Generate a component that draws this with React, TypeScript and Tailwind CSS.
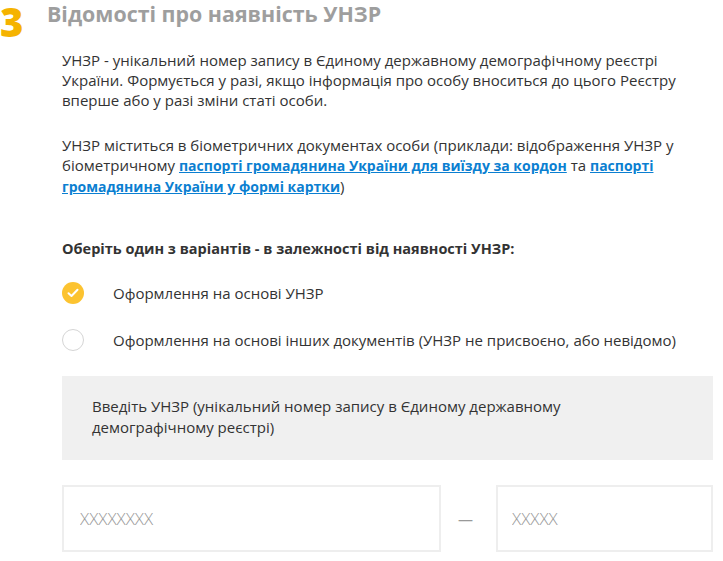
import React, { useState } from 'react'

const font = { fontFamily: '"Open Sans", "Noto Sans", sans-serif' }

const Radio: React.FC<{ checked: boolean }> = ({ checked }) =>
  checked ? (
    <span className="flex h-[22px] w-[22px] shrink-0 items-center justify-center rounded-full bg-[#fcc330]">
      <svg width="12" height="10" viewBox="0 0 12 10" fill="none">
        <path d="M1.5 5.2 4.5 8 10.5 1.8" stroke="#fff" strokeWidth="2" strokeLinecap="round" strokeLinejoin="round" />
      </svg>
    </span>
  ) : (
    <span className="h-[22px] w-[22px] shrink-0 rounded-full border border-[#d5d5d5] bg-white" />
  )

export default function App() {
  const [choice, setChoice] = useState(0)
  const options = [
    'Оформлення на основі УНЗР',
    'Оформлення на основі інших документів (УНЗР не присвоєно, або невідомо)',
  ]

  return (
    <div className="h-[561px] w-[723px] overflow-hidden bg-white text-[#333]" style={font}>
      <div className="flex items-start">
        <div className="w-[47px] text-[40px] font-extrabold leading-[44px] text-[#f5b300]">3</div>
        <h2 className="pt-[1px] text-[21.4px] font-bold leading-[26px] text-[#9e9e9e]">Відомості про наявність УНЗР</h2>
      </div>

      <div className="ml-[62px] mr-[10px] mt-[6px] text-[15px] leading-[20px]">
        <p>
          УНЗР - унікальний номер запису в Єдиному державному демографічному реєстрі України. Формується у разі,
          якщо інформація про особу вноситься до цього Реєстру вперше або у разі зміни статі особи.
        </p>
        <p className="mt-[25px]">
          УНЗР міститься в біометричних документах особи (приклади: відображення УНЗР у біометричному{' '}
          <a href="#" className="text-[14px] leading-[20px] font-bold text-[#0b7fd1] underline">паспорті громадянина України для виїзду за кордон</a>{' '}
          та{' '}
          <a href="#" className="text-[14px] leading-[20px] font-bold text-[#0b7fd1] underline">паспорті громадянина України у формі картки</a>)
        </p>

        <p className="mt-[42px] text-[14.5px] font-bold">Оберіть один з варіантів - в залежності від наявності УНЗР:</p>

        <div className="mt-[23px] flex flex-col gap-[25px]">
          {options.map((o, i) => (
            <label key={o} className="flex cursor-pointer items-center" onClick={() => setChoice(i)}>
              <Radio checked={choice === i} />
              <span className="ml-[29px]">{o}</span>
            </label>
          ))}
        </div>

        <div className="mt-[25px] bg-[#f0f0f0] px-[30px] pb-[22px] pt-[20px] leading-[21px]">
          Введіть УНЗР (унікальний номер запису в Єдиному державному
          <br />
          демографічному реєстрі)
        </div>

        <div className="mt-[25px] flex items-center">
          <input
            placeholder="XXXXXXXX"
            className="h-[67px] w-[379px] border-2 border-[#eee] px-[16px] text-[17px] font-light outline-none placeholder:text-[#999]"
            style={font}
          />
          <span className="flex-1 pr-[6px] text-center text-[#999]">—</span>
          <input
            placeholder="XXXXX"
            className="h-[67px] w-[217px] border-2 border-[#eee] px-[14px] text-[17px] font-light outline-none placeholder:text-[#999]"
            style={font}
          />
        </div>
      </div>
    </div>
  )
}
